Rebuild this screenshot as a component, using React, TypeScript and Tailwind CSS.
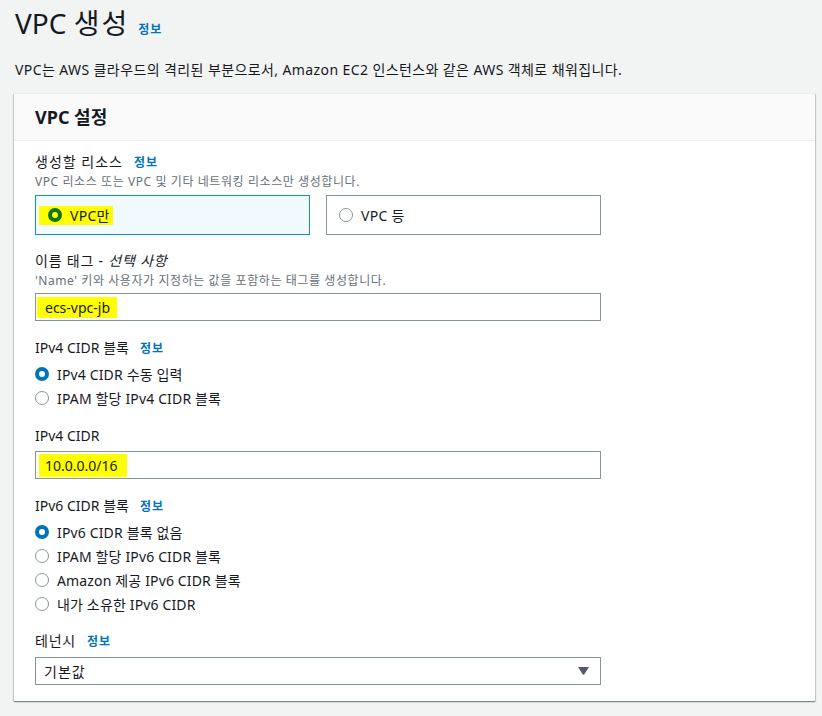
import React from "react";

const font = { fontFamily: '"Noto Sans", "Noto Sans CJK KR", sans-serif' };

function Info() {
  return <span className="ml-[11px] text-[12px] leading-[20px] font-bold tracking-[1px] text-[#0073bb]">정보</span>;
}

function Desc({ children }: { children: React.ReactNode }) {
  return <div className="mt-[2px] text-[12px] leading-[16px] tracking-[0.58px] text-[#687078]">{children}</div>;
}

function Radio({ checked, green }: { checked?: boolean; green?: boolean }) {
  if (checked) {
    return (
      <span
        className={
          "inline-block h-[14px] w-[14px] shrink-0 rounded-full border-[4px] " +
          (green ? "border-[#0e7311] bg-[#ffff00]" : "border-[#0073bb] bg-white")
        }
      />
    );
  }
  return <span className="inline-block h-[14px] w-[14px] shrink-0 rounded-full border-[1.5px] border-[#879596] bg-white" />;
}

function RadioRow({ checked, children }: { checked?: boolean; children: React.ReactNode }) {
  return (
    <div className="flex h-[24px] items-center gap-[8px] text-[14px] tracking-[0.15px] text-[#16191f]">
      <Radio checked={checked} />
      <span>{children}</span>
    </div>
  );
}

export default function App() {
  return (
    <div className="min-h-[716px] w-[822px] bg-[#f2f3f3]" style={font}>
      <div className="px-[15px] pt-[5px]">
        <div className="flex h-[36px] items-baseline">
          <h1 className="text-[28px] leading-[36px] font-normal text-[#16191f]">
            VPC <span className="tracking-[2px]">생성</span>
          </h1>
          <span className="ml-[9px] text-[12px] leading-[20px] font-bold tracking-[1px] text-[#0073bb]">정보</span>
        </div>
        <p className="mt-[19px] text-[14px] leading-[20px] tracking-[0.4px] text-[#16191f]">
          VPC는 AWS 클라우드의 격리된 부분으로서, Amazon EC2 인스턴스와 같은 AWS 객체로 채워집니다.
        </p>
      </div>

      <div className="ml-[14px] mt-[13px] w-[801px] bg-white border-t border-[#eaeded] shadow-[0_1px_1px_0_rgba(0,28,36,0.3),1px_1px_1px_0_rgba(0,28,36,0.15),-1px_1px_1px_0_rgba(0,28,36,0.15)]">
        <div className="flex h-[47px] items-center border-b border-[#eaeded] bg-[#fafafa] pl-[21px]">
          <h2 className="text-[18px] font-bold text-[#16191f]">VPC 설정</h2>
        </div>

        <div className="px-[21px] pt-[11px] pb-[16px]">
          <div className="flex h-[20px] items-baseline text-[14px] leading-[20px] text-[#16191f]">
            <span className="tracking-[1px]">생성할 리소스</span>
            <Info />
          </div>
          <Desc>VPC 리소스 또는 VPC 및 기타 네트워킹 리소스만 생성합니다.</Desc>
          <div className="mt-[5px] flex w-[566px] gap-[16px]">
            <div className="flex h-[40px] w-[275px] items-center border border-[#0a94c8] bg-[#f1faff] pl-[3px]">
              <span className="flex h-[19px] items-center gap-[8px] bg-[#ffff00] pl-[9px] pr-[3px] text-[14px] tracking-[0.3px] text-[#16191f]">
                <Radio checked green />
                <span>VPC만</span>
              </span>
            </div>
            <div className="flex h-[40px] w-[275px] items-center gap-[8px] border border-[#879596] bg-white pl-[12px] text-[14px] tracking-[0.3px] text-[#16191f]">
              <Radio />
              <span>VPC 등</span>
            </div>
          </div>

          <div className="mt-[16px]">
            <div className="flex h-[20px] items-baseline text-[14px] leading-[20px] tracking-[0.8px] text-[#16191f]">
              <span>
                이름 태그 - <i>선택 사항</i>
              </span>
            </div>
            <Desc>'Name' 키와 사용자가 지정하는 값을 포함하는 태그를 생성합니다.</Desc>
            <div className="mt-[4px] flex h-[28px] w-[566px] items-center border border-[#879596] bg-white pl-[1px]">
              <span className="flex h-[21px] items-center bg-[#ffff00] pl-[8px] pr-[7px] text-[14px] text-[#16191f]">ecs-vpc-jb</span>
            </div>
          </div>

          <div className="mt-[17px]">
            <div className="flex h-[20px] items-baseline text-[14px] leading-[20px] text-[#16191f]">
              <span>IPv4 CIDR 블록</span>
              <Info />
            </div>
            <div className="mt-[4px]">
              <RadioRow checked>IPv4 CIDR 수동 입력</RadioRow>
              <RadioRow>IPAM 할당 IPv4 CIDR 블록</RadioRow>
            </div>
          </div>

          <div className="mt-[16px]">
            <div className="flex h-[20px] items-baseline text-[14px] leading-[20px] text-[#16191f]">
              <span>IPv4 CIDR</span>
            </div>
            <div className="mt-[5px] flex h-[28px] w-[566px] items-center border border-[#879596] bg-white pl-[3px]">
              <span className="flex h-[23px] items-center bg-[#ffff00] pl-[6px] pr-[9px] text-[14px] text-[#16191f]">10.0.0.0/16</span>
            </div>
          </div>

          <div className="mt-[17px]">
            <div className="flex h-[20px] items-baseline text-[14px] leading-[20px] text-[#16191f]">
              <span>IPv6 CIDR 블록</span>
              <Info />
            </div>
            <div className="mt-[4px]">
              <RadioRow checked>IPv6 CIDR 블록 없음</RadioRow>
              <RadioRow>IPAM 할당 IPv6 CIDR 블록</RadioRow>
              <RadioRow>Amazon 제공 IPv6 CIDR 블록</RadioRow>
              <RadioRow>내가 소유한 IPv6 CIDR</RadioRow>
            </div>
          </div>

          <div className="mt-[15px]">
            <div className="flex h-[20px] items-baseline text-[14px] leading-[20px] text-[#16191f]">
              <span className="tracking-[0.8px]">테넌시</span>
              <Info />
            </div>
            <div className="mt-[6px] flex h-[28px] w-[566px] items-center justify-between border border-[#879596] bg-white pl-[8px] pr-[11px] text-[14px] text-[#16191f]">
              <span className="tracking-[1px]">기본값</span>
              <svg width="11" height="8" viewBox="0 0 11 8">
                <path d="M0 0 H11 L6.2 7.4 Q5.5 8.2 4.8 7.4 Z" fill="#545b64" />
              </svg>
            </div>
          </div>
        </div>
      </div>
    </div>
  );
}
